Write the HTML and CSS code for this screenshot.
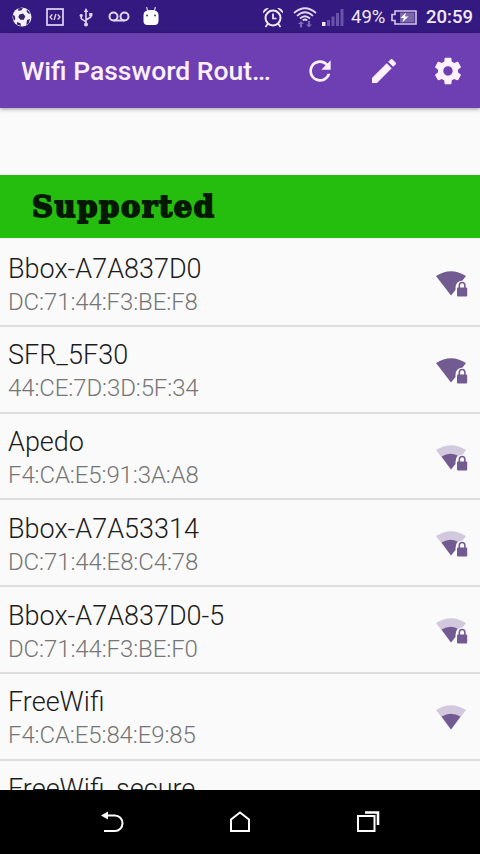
FILE: index.html
```html
<!DOCTYPE html>
<html lang="en">
<head>
    <meta charset="UTF-8">
    <meta name="viewport" content="width=device-width, initial-scale=1.0">
    <title>Wifi Password Router</title>
    <link rel="stylesheet" href="styles.css">
</head>
<body>
    <!-- shared wifi icons -->
    <svg class="defs" width="0" height="0">
        <symbol id="wifi-full" viewBox="0 0 34 28">
            <path fill="#725b91" d="M1 6Q16 -3.500 31 6L27.500 10.500Q20.500 11 20.500 18V20L16 25.500Z"/>
            <use href="#lock"/>
        </symbol>
        <symbol id="wifi-half" viewBox="0 0 34 28">
            <path fill="#d2c9de" d="M1 6Q16 -3.500 31 6L27.500 10.500Q24 10.500 22 13L16 25.500Z"/>
            <path fill="#725b91" d="M6.500 12.500Q15 7.500 22.500 11.500Q20.500 14 20.500 18V20L16 25.500Z"/>
            <use href="#lock"/>
        </symbol>
        <symbol id="wifi-open" viewBox="0 0 34 28">
            <path fill="#d2c9de" d="M1 6Q16 -3.500 31 6L16 25.500Z"/>
            <path fill="#725b91" d="M6.500 12.500Q16 7 25.500 12.500L16 25.500Z"/>
        </symbol>
        <symbol id="lock" viewBox="0 0 34 28">
            <path fill="none" stroke="#725b91" stroke-width="1.600" d="M24.300 18V15.500a2.800 3 0 0 1 5.600 0V18"/>
            <rect x="22" y="17.500" width="10.200" height="9" rx="1" fill="#725b91"/>
        </symbol>
    </svg>

    <div class="screen">
        <div class="status-bar">
            <div class="status-left">
                <svg width="20" height="20" viewBox="0 0 20 20">
                    <circle cx="10" cy="10" r="9.500" fill="#f4effb"/>
                    <path fill="#35246b" d="M7.500 7.500l3.500-1 2.300 2.700-1.500 3.500H8.300L6.300 10zM6 1.500l5-.8-1.500 2.500-3 .8zM15 2.500l3.700 4.200-2.500-.2-1.700-2.200zM.8 8l2 .8.500 3.200L1.700 14zM5 15l3.500 1.300.5 2.700-4-1.500zM15 13l3-1-1.300 4.500-2.400 1.300z"/>
                </svg>
                <svg width="18" height="18" viewBox="0 0 18 18" fill="none" stroke="#e2d8f3">
                    <rect x="1" y="1" width="16" height="16" stroke-width="1.700"/>
                    <path stroke-width="1.300" d="M6.300 6.500L4 9l2.300 2.500M11.700 6.500L14 9l-2.300 2.500M9.900 6L8.100 12"/>
                </svg>
                <svg width="16" height="19" viewBox="-1 0 16 19" fill="none" stroke="#e2d8f3" stroke-width="1.500">
                    <path d="M7 3V16M2.200 8v2.500L7 14M11.800 7v2L7 12"/>
                    <path fill="#e2d8f3" stroke="none" d="M7 0l2.200 4H4.800zM10.200 5h3.200v3.200h-3.200z"/>
                    <circle cx="2.200" cy="7.500" r="1.600" fill="#e2d8f3" stroke="none"/>
                    <circle cx="7" cy="16.500" r="2" fill="#e2d8f3" stroke="none"/>
                </svg>
                <svg width="22" height="12" viewBox="0 0 22 12" fill="none" stroke="#e2d8f3" stroke-width="2">
                    <circle cx="5.500" cy="5.500" r="4"/>
                    <circle cx="16.500" cy="5.500" r="4"/>
                    <path d="M5.500 9.500h11"/>
                </svg>
                <svg class="android" width="16" height="20" viewBox="0 0 16 20">
                    <path stroke="#cbbce6" stroke-width="1.300" d="M3.500 1l1.300 4M12.500 1l-1.300 4"/>
                    <path fill="#fff" d="M.5 9q0-5 7.500-5t7.500 5v6q0 4-4 4h-7q-4 0-4-4z"/>
                    <circle cx="4" cy="9.500" r=".9" fill="#35246b"/>
                    <circle cx="12" cy="9.500" r=".9" fill="#35246b"/>
                </svg>
            </div>
            <div class="status-right">
                <svg width="22" height="21" viewBox="0 0 22 21" fill="none" stroke="#f1eafb" stroke-width="2">
                    <circle cx="11" cy="11" r="7.500"/>
                    <path stroke-width="1.700" d="M11 6.500V11.500H14.500M6 16.500L3.500 20M16 16.500L18.500 20"/>
                    <path fill="#f1eafb" stroke="none" d="M1 6.500Q.5 1 7 1zM21 6.500Q21.500 1 15 1z"/>
                </svg>
                <svg class="wifi-status" width="24" height="21" viewBox="0 0 24 21" fill="none" stroke="#e2d8f3" stroke-width="1.700">
                    <path d="M1 6Q12-3.500 23 6M4 9Q12 1.500 20 9M7 11.500Q12 7 17 11.500M9.800 13.500q2.200-2 4.400 0"/>
                    <path fill="#8069b5" stroke="none" d="M8 14l3 3H9v3.500H7V17H5zM16 20.500l3-3h-2V14h-2v3.500h-2z"/>
                </svg>
                <svg class="signal" width="22" height="17" viewBox="0 0 22 17" fill="#6853a7">
                    <path fill="#f1eafb" d="M0 13h3.500v4H0z"/>
                    <path d="M5 11h3v6H5zM9.500 7.500h3V17h-3zM14 4h3v13h-3zM18.500 0h3v17h-3z"/>
                </svg>
                <span class="percent">49%</span>
                <svg class="battery" width="26" height="15" viewBox="0 0 26 15">
                    <path fill="none" stroke="#d4c8eb" stroke-width="1.600" d="M4 1H25V14H4V10.500H1V4.500H4z"/>
                    <path fill="#7b68ab" d="M9 2.500h14.500v10H9z"/>
                    <path fill="#fff" d="M15 2.500L9.500 8h3.300l-1.600 4.500L17.500 6.500h-3.600z"/>
                </svg>
                <span class="clock">20:59</span>
            </div>
        </div>

        <div class="app-bar">
            <h1 class="app-title">Wifi Password Rout…</h1>
            <div class="actions">
                <svg width="32" height="32" viewBox="0 0 24 24" fill="#fdf1ff">
                    <path d="M17.650 6.350C16.200 4.900 14.210 4 12 4c-4.420 0-7.990 3.580-7.990 8s3.570 8 7.990 8c3.730 0 6.840-2.550 7.730-6h-2.080c-.82 2.330-3.040 4-5.650 4-3.310 0-6-2.690-6-6s2.690-6 6-6c1.660 0 3.140.69 4.220 1.780L13 11h7V4l-2.350 2.350z"/>
                </svg>
                <svg width="32" height="32" viewBox="0 0 24 24" fill="#fdf1ff">
                    <path d="M3 17.250V21h3.750L17.810 9.940l-3.750-3.750L3 17.250zM20.710 7.040c.39-.39.39-1.020 0-1.410l-2.340-2.340c-.39-.39-1.020-.39-1.410 0l-1.830 1.830 3.750 3.750 1.830-1.830z"/>
                </svg>
                <svg width="32" height="32" viewBox="0 0 24 24" fill="#fdf1ff">
                    <path d="M19.430 12.980c.04-.32.07-.64.07-.98s-.03-.66-.07-.98l2.110-1.650c.19-.15.24-.42.12-.64l-2-3.460c-.12-.22-.39-.3-.61-.22l-2.490 1c-.52-.4-1.080-.73-1.690-.98l-.38-2.650C14.460 2.180 14.250 2 14 2h-4c-.25 0-.46.18-.49.42l-.38 2.650c-.61.25-1.170.59-1.690.98l-2.490-1c-.23-.09-.49 0-.61.22l-2 3.460c-.13.22-.07.49.12.64l2.110 1.650c-.04.32-.07.65-.07.98s.03.66.07.98l-2.110 1.650c-.19.15-.24.42-.12.64l2 3.460c.12.22.39.3.61.22l2.490-1c.52.4 1.080.73 1.690.98l.38 2.650c.03.24.24.42.49.42h4c.25 0 .46-.18.49-.42l.38-2.650c.61-.25 1.170-.59 1.690-.98l2.490 1c.23.09.49 0 .61-.22l2-3.460c.12-.22.07-.49-.12-.64l-2.110-1.650zM12 15.500c-1.930 0-3.500-1.570-3.500-3.500s1.570-3.500 3.500-3.500 3.500 1.570 3.500 3.500-1.570 3.500-3.500 3.500z"/>
                </svg>
            </div>
        </div>

        <div class="content">
            <div class="banner"><span>Supported</span></div>
            <ul class="network-list">
                <li class="network">
                    <div class="info">
                        <div class="ssid">Bbox-A7A837D0</div>
                        <div class="mac">DC:71:44:F3:BE:F8</div>
                    </div>
                    <svg class="level"><use href="#wifi-full"/></svg>
                </li>
                <li class="network">
                    <div class="info">
                        <div class="ssid">SFR_5F30</div>
                        <div class="mac">44:CE:7D:3D:5F:34</div>
                    </div>
                    <svg class="level"><use href="#wifi-full"/></svg>
                </li>
                <li class="network">
                    <div class="info">
                        <div class="ssid">Apedo</div>
                        <div class="mac">F4:CA:E5:91:3A:A8</div>
                    </div>
                    <svg class="level"><use href="#wifi-half"/></svg>
                </li>
                <li class="network">
                    <div class="info">
                        <div class="ssid">Bbox-A7A53314</div>
                        <div class="mac">DC:71:44:E8:C4:78</div>
                    </div>
                    <svg class="level"><use href="#wifi-half"/></svg>
                </li>
                <li class="network">
                    <div class="info">
                        <div class="ssid">Bbox-A7A837D0-5</div>
                        <div class="mac">DC:71:44:F3:BE:F0</div>
                    </div>
                    <svg class="level"><use href="#wifi-half"/></svg>
                </li>
                <li class="network">
                    <div class="info">
                        <div class="ssid">FreeWifi</div>
                        <div class="mac">F4:CA:E5:84:E9:85</div>
                    </div>
                    <svg class="level"><use href="#wifi-open"/></svg>
                </li>
                <li class="network">
                    <div class="info">
                        <div class="ssid">FreeWifi_secure</div>
                    </div>
                </li>
            </ul>
        </div>

        <div class="nav-bar">
            <svg width="26" height="24" viewBox="0 0 26 24">
                <path fill="none" stroke="#fff" stroke-width="2" d="M7 5.500H16a7.500 7.800 0 0 1 0 15.600H5"/>
                <path fill="#fff" d="M2 5.500L9 1.500V9.500z"/>
            </svg>
            <svg width="26" height="24" viewBox="0 0 26 24">
                <path fill="none" stroke="#fff" stroke-width="2" d="M4 21V9.500L13 2.500L22 9.500V21z"/>
            </svg>
            <svg width="26" height="24" viewBox="0 0 26 24" fill="none" stroke="#fff" stroke-width="2">
                <rect x="3" y="6" width="16.500" height="15"/>
                <path stroke-width="2.600" d="M10 2.500H23V15"/>
            </svg>
        </div>
    </div>
</body>
</html>
```
FILE: styles.css
```css
* {
    margin: 0;
    padding: 0;
    box-sizing: border-box;
}

body {
    font-family: Roboto, "Liberation Sans", sans-serif;
    background: #fafafa;
}

svg {
    display: block;
    flex-shrink: 0;
}

.defs {
    position: absolute;
}

.screen {
    width: 480px;
    height: 854px;
    display: flex;
    flex-direction: column;
    overflow: hidden;
}

.status-bar {
    height: 33px;
    flex-shrink: 0;
    background: #341a80;
    color: #f1eafb;
    display: flex;
    align-items: center;
    justify-content: space-between;
    padding: 1px 6px 0 12px;
}

.status-left,
.status-right {
    display: flex;
    align-items: center;
}

.status-left {
    gap: 14px;
}

.android {
    margin-left: -1px;
    margin-bottom: 2px;
}

.wifi-status {
    margin-left: 9px;
}

.signal {
    margin-left: 5px;
}

.percent {
    font-size: 18.5px;
    margin-left: 7px;
    width: 40px;
}

.clock {
    font-size: 18.5px;
    font-weight: 500;
    margin-left: 9px;
    width: 48px;
}

.app-bar {
    height: 75px;
    flex-shrink: 0;
    background: #6e3eb3;
    display: flex;
    align-items: center;
    justify-content: space-between;
    padding: 0 16px 0 21px;
    box-shadow: 0 1px 4px rgba(0,0,0,0.4);
    z-index: 1;
}

.app-title {
    font-size: 26.5px;
    font-weight: 500;
    color: #fdf1ff;
    white-space: nowrap;
}

.actions {
    display: flex;
    gap: 32px;
}

.content {
    flex: 1;
    min-height: 0;
    padding-top: 67px;
    overflow: hidden;
}

.banner {
    height: 63px;
    background: #25bd0e;
    padding-left: 32px;
    display: flex;
    align-items: center;
}

.banner span {
    font-family: "DejaVu Serif", serif;
    font-size: 29px;
    font-weight: bold;
    letter-spacing: 1.6px;
    color: #051800;
    -webkit-text-stroke: 1.8px #051800;
}

.network-list {
    list-style: none;
    padding-top: 2px;
}

.network {
    height: 86.8px;
    border-bottom: 2px solid #dedede;
    padding: 11.5px 11px 0 8px;
    display: flex;
    justify-content: space-between;
}

.ssid {
    font-size: 27px;
    line-height: 34px;
    font-weight: 300;
    color: #1c1c1c;
}

.mac {
    font-size: 24px;
    line-height: 33px;
    font-weight: 300;
    letter-spacing: -0.12px;
    color: #757575;
}

.level {
    width: 34px;
    height: 28px;
    margin-top: 18.5px;
}

.nav-bar {
    height: 64px;
    flex-shrink: 0;
    background: #000;
    display: flex;
    align-items: center;
    justify-content: center;
    gap: 102px;
}
```
